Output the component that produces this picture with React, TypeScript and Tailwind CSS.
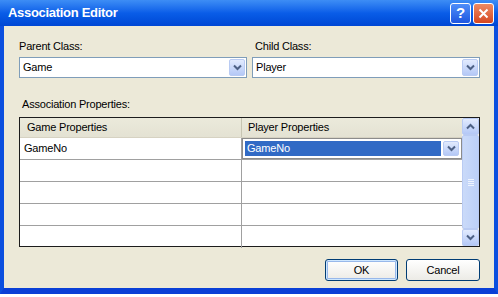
import React from "react";

function Chevron({ color = "#4d6185" }: { color?: string }) {
  return (
    <svg width="9" height="7" viewBox="0 0 9 7">
      <path d="M1 1.5 L4.5 5 L8 1.5" stroke={color} strokeWidth="2" fill="none" />
    </svg>
  );
}

function ChevronUp() {
  return (
    <svg width="9" height="7" viewBox="0 0 9 7">
      <path d="M1 5.5 L4.5 2 L8 5.5" stroke="#4d6185" strokeWidth="2" fill="none" />
    </svg>
  );
}

function DropButton() {
  return (
    <div className="flex w-[16px] items-center justify-center rounded-[2px] border border-[#b9cbf3] bg-gradient-to-b from-[#e2ebfe] to-[#b4c8f6]">
      <Chevron />
    </div>
  );
}

function Combo({ value }: { value: string }) {
  return (
    <div className="flex h-[21px] items-stretch border border-[#7f9db9] bg-white p-px">
      <span className="flex-1 pl-[2px] leading-[17px]">{value}</span>
      <DropButton />
    </div>
  );
}

function XpButton({ label, isDefault }: { label: string; isDefault?: boolean }) {
  return (
    <button
      className={
        "h-[22px] rounded-[3px] border border-[#003c74] bg-gradient-to-b from-white to-[#ecebe6] text-[11px] " +
        (isDefault ? "w-[73px] shadow-[inset_0_0_0_1px_#cee7ff,inset_0_0_0_2px_#98b8ea]" : "w-[74px]")
      }
    >
      {label}
    </button>
  );
}

const rows = ["GameNo", "", "", "", ""];

export default function App() {
  return (
    <div className="flex h-[297px] w-[498px] flex-col bg-white font-['Liberation_Sans',Arial,sans-serif] text-[11px] tracking-[-0.2px] text-black">
      <div className="flex h-[294px] flex-col">
        {/* title bar */}
        <div className="flex h-[26px] items-center bg-gradient-to-b from-[#3d8df5] via-[#0a5de8] to-[#0047d4] pr-[4px] pl-[8px]">
          <span className="flex-1 text-[13px] font-bold tracking-[-0.3px] text-white">Association Editor</span>
          <div className="flex gap-[2px]">
            <div className="flex h-[21px] w-[21px] items-center justify-center rounded-[3px] border border-white bg-gradient-to-b from-[#4f8ef8] to-[#1f56e0] text-[15px] font-bold text-white">
              ?
            </div>
            <div className="flex h-[21px] w-[21px] items-center justify-center rounded-[3px] border border-white bg-gradient-to-b from-[#ee8a62] to-[#d5461e]">
              <svg width="11" height="11" viewBox="0 0 11 11">
                <path d="M1.5 1.5 L9.5 9.5 M9.5 1.5 L1.5 9.5" stroke="white" strokeWidth="2" />
              </svg>
            </div>
          </div>
        </div>

        {/* body */}
        <div className="flex flex-1 flex-col border-x-4 border-b-[6px] border-x-[#0b4fdf] border-b-[#0a3fd6] bg-[#ece9d8] pt-[14px] pr-[14px] pl-[15px]">
          <div className="grid grid-cols-2 gap-[5px]">
            <div className="flex flex-col gap-[4px]">
              <span className="leading-[13px]">Parent Class:</span>
              <Combo value="Game" />
            </div>
            <div className="flex flex-col gap-[4px]">
              <span className="pl-[3px] leading-[13px]">Child Class:</span>
              <Combo value="Player" />
            </div>
          </div>

          <span className="mt-[20px] pl-[3px] leading-[13px]">Association Properties:</span>

          <div className="mt-[6px] flex h-[130px] border border-[#1c1c1c] bg-white">
            <div className="flex flex-1 flex-col">
              <div className="flex h-[20px] border-b border-[#d6d2c2] bg-gradient-to-b from-[#ebeadb] to-[#e4e2d3]">
                <div className="w-[222px] border-r border-[#c7c5b2] pl-[7px] leading-[19px]">Game Properties</div>
                <div className="flex-1 pl-[6px] leading-[19px]">Player Properties</div>
              </div>
              {rows.map((r, i) => (
                <div key={i} className="flex h-[22px] shrink-0 border-b border-[#a0a0a0] last:border-b-0">
                  <div className="w-[222px] border-r border-[#a0a0a0] pl-[4px] leading-[21px]">{r}</div>
                  <div className="flex-1">
                    {i === 0 && (
                      <div className="flex h-full items-stretch border border-[#8c8c8c] p-[2px]">
                        <span className="flex-1 bg-[#316ac5] pl-[2px] leading-[15px] text-white">GameNo</span>
                        <div className="ml-[2px] flex">
                          <DropButton />
                        </div>
                      </div>
                    )}
                  </div>
                </div>
              ))}
            </div>

            {/* scrollbar */}
            <div className="flex w-[17px] flex-col bg-[#f4f3ee]">
              <div className="flex h-[17px] items-center justify-center rounded-[2px] border border-[#b9cbf3] bg-gradient-to-b from-[#e2ebfe] to-[#b4c8f6]">
                <ChevronUp />
              </div>
              <div className="flex flex-1 flex-col items-center justify-center gap-[1px] rounded-[2px] border border-[#b9cbf3] bg-gradient-to-r from-[#cadaf9] to-[#bcd0f8]">
                <span className="h-px w-[6px] bg-[#eef4fe]" />
                <span className="h-px w-[6px] bg-[#eef4fe]" />
                <span className="h-px w-[6px] bg-[#eef4fe]" />
                <span className="h-px w-[6px] bg-[#eef4fe]" />
              </div>
              <div className="flex h-[17px] items-center justify-center rounded-[2px] border border-[#b9cbf3] bg-gradient-to-b from-[#e2ebfe] to-[#b4c8f6]">
                <Chevron />
              </div>
            </div>
          </div>

          <div className="mt-[12px] flex justify-end gap-[8px]">
            <XpButton label="OK" isDefault />
            <XpButton label="Cancel" />
          </div>
        </div>
      </div>
    </div>
  );
}
